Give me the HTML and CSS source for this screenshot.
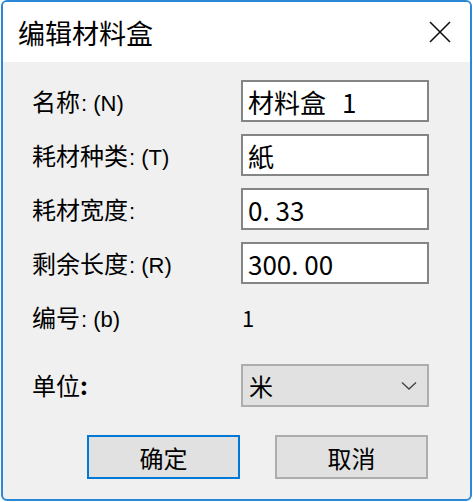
FILE: index.html
```html
<!DOCTYPE html>
<html lang="zh-CN">
<head>
    <meta charset="UTF-8">
    <title>编辑材料盒</title>
    <link rel="stylesheet" href="styles.css">
</head>
<body>
    <div class="dialog">
        <div class="titlebar">
            <span class="title">编辑材料盒</span>
            <button class="close" aria-label="关闭">
                <svg width="22" height="22" viewBox="0 0 22 22">
                    <path d="M1 1 L21 21 M21 1 L1 21" stroke="#111" stroke-width="1.6" fill="none"/>
                </svg>
            </button>
        </div>

        <div class="content">
            <div class="form">
                <label class="label">名称<span class="latin">: (N)</span></label>
                <div class="field">材料盒<span class="gap"> </span>1</div>

                <label class="label">耗材种类<span class="latin">: (T)</span></label>
                <div class="field">紙</div>

                <label class="label">耗材宽度<span class="latin">:</span></label>
                <div class="field">0. 33</div>

                <label class="label">剩余长度<span class="latin">: (R)</span></label>
                <div class="field">300. 00</div>

                <label class="label">编号<span class="latin">: (b)</span></label>
                <div class="value">1</div>

                <label class="label label-unit">单位<b>:</b></label>
                <div class="select">
                    <span>米</span>
                    <svg width="16" height="10" viewBox="0 0 16 10">
                        <polyline points="1,1.5 8,8 15,1.5" stroke="#444" stroke-width="1.4" fill="none"/>
                    </svg>
                </div>
            </div>

            <div class="buttons">
                <button class="btn btn-default">确定</button>
                <button class="btn">取消</button>
            </div>
        </div>
    </div>
</body>
</html>
```

FILE: styles.css
```css
body {
    margin: 0;
    font-family: "Noto Sans CJK SC", "Noto Sans", sans-serif;
    background-color: #fff;
}
.dialog {
    margin: 0 1px;
    width: 467px;
    height: 497px;
    border: 2px solid #2b88d9;
    border-radius: 6px;
    background-color: #f0f0f0;
    overflow: hidden;
}
.titlebar {
    height: 60px;
    background-color: #fff;
    display: flex;
    align-items: center;
    justify-content: space-between;
    padding: 0 19px 0 15px;
}
.title {
    font-size: 27px;
    color: #000;
}
.close {
    border: none;
    background: none;
    padding: 0;
    width: 22px;
    height: 22px;
    display: flex;
}
.content {
    padding-top: 18px;
}
.form {
    display: grid;
    grid-template-columns: 209px 188px;
    grid-template-rows: repeat(5, 42px) auto;
    row-gap: 12px;
    padding-left: 29px;
}
.label {
    font-size: 24px;
    line-height: 42px;
    color: #000;
    white-space: pre;
}
.latin {
    font-family: "Liberation Sans", sans-serif;
    font-size: 22px;
    margin-left: 1px;
}
.field {
    box-sizing: border-box;
    border: 2px solid #858585;
    background-color: #fff;
    font-size: 26px;
    padding-left: 5px;
    display: flex;
    align-items: center;
    color: #000;
    white-space: pre;
}
.gap {
    width: 16px;
}
.value {
    font-size: 22px;
    display: flex;
    align-items: center;
    padding-left: 1px;
}
.label-unit,
.select {
    margin-top: 14px;
    height: 43px;
}
.select {
    box-sizing: border-box;
    border: 2px solid #adadad;
    background-color: #e1e1e1;
    font-size: 24px;
    display: flex;
    align-items: center;
    justify-content: space-between;
    padding: 0 10px 0 6px;
}
.buttons {
    display: flex;
    justify-content: flex-end;
    gap: 35px;
    padding-right: 42px;
    margin-top: 28px;
}
.btn {
    width: 153px;
    height: 44px;
    box-sizing: border-box;
    border: 2px solid #adadad;
    background-color: #e1e1e1;
    font-family: "Noto Sans CJK SC", sans-serif;
    font-size: 24px;
    color: #000;
    padding: 0;
}
.btn-default {
    border-color: #0078d7;
}
```
